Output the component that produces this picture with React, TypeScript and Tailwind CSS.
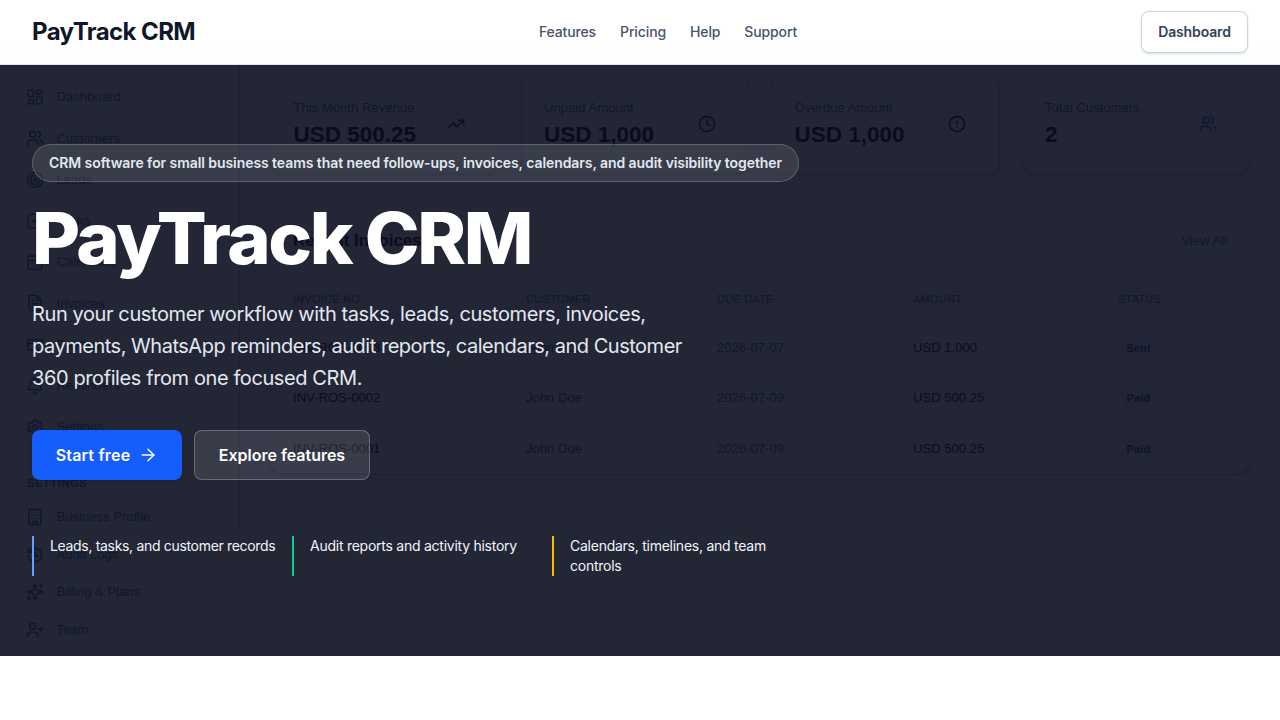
import {
  ArrowRight,
  Bell,
  Building,
  CalendarDays,
  CircleAlert,
  Clock,
  CreditCard,
  FileText,
  History,
  LayoutDashboard,
  Settings,
  Sparkles,
  SquareCheckBig,
  Target,
  TrendingUp,
  UserPlus,
  Users,
} from "lucide-react";
import type { LucideIcon } from "lucide-react";

interface NavItem {
  label: string;
  icon: LucideIcon;
}

const mainItems: NavItem[] = [
  { label: "Dashboard", icon: LayoutDashboard },
  { label: "Customers", icon: Users },
  { label: "Leads", icon: Target },
  { label: "Tasks", icon: SquareCheckBig },
  { label: "Calendars", icon: CalendarDays },
  { label: "Invoices", icon: FileText },
  { label: "Payments", icon: CreditCard },
  { label: "Reminders", icon: Bell },
  { label: "Settings", icon: Settings },
];

const settingsItems: NavItem[] = [
  { label: "Business Profile", icon: Building },
  { label: "Audit Logs", icon: History },
  { label: "Billing & Plans", icon: Sparkles },
  { label: "Team", icon: UserPlus },
];

const stats = [
  { label: "This Month Revenue", value: "USD 500.25", icon: TrendingUp, color: "text-[#0c1024]" },
  { label: "Unpaid Amount", value: "USD 1,000", icon: Clock, color: "text-[#120d1f]" },
  { label: "Overdue Amount", value: "USD 1,000", icon: CircleAlert, color: "text-[#120a1c]" },
  { label: "Total Customers", value: "2", icon: Users, color: "text-[#13182e]" },
];

const invoices = [
  { no: "INV-ROS-0003", customer: "John Doe", due: "2026-07-07", amount: "USD 1,000", status: "Sent" },
  { no: "INV-ROS-0002", customer: "John Doe", due: "2026-07-09", amount: "USD 500.25", status: "Paid" },
  { no: "INV-ROS-0001", customer: "John Doe", due: "2026-07-09", amount: "USD 500.25", status: "Paid" },
];

const highlights = [
  {
    text: "Leads, tasks, and customer records",
    className: "border-[#64a0ff] tracking-[-0.023em]",
  },
  {
    text: "Audit reports and activity history",
    className: "border-[#00d492] tracking-[-0.018em]",
  },
  {
    text: "Calendars, timelines, and team\ncontrols",
    className: "border-[#ffb900] tracking-[-0.018em]",
  },
];

function Header() {
  return (
    <header className="flex h-[65px] items-center justify-between border-b border-slate-200 bg-linear-to-b from-white from-60% to-[#fcfefe] px-8">
      <a className="w-[163px] text-[24px] leading-8 font-bold tracking-[-0.024em] whitespace-nowrap text-[#0f172b]">
        PayTrack CRM
      </a>
      <nav className="flex gap-6 text-sm font-medium tracking-[-0.009em] text-[#45556c]">
        <a>Features</a>
        <a>Pricing</a>
        <a>Help</a>
        <a>Support</a>
      </nav>
      <button className="h-[42px] w-[107px] rounded-lg border border-[#cad5e2] bg-white text-sm font-semibold tracking-[-0.01em] text-[#314158] shadow-sm">
        Dashboard
      </button>
    </header>
  );
}

function SidebarRow({ item, className = "" }: { item: NavItem; className?: string }) {
  const Icon = item.icon;
  return (
    <div className={`flex items-center gap-[12.5px] pl-[26px] ${className}`}>
      <Icon size={18} strokeWidth={2} />
      <span>{item.label}</span>
    </div>
  );
}

// Dimmed product view that sits behind the hero copy
function DashboardBackdrop() {
  return (
    <div
      aria-hidden
      className="absolute inset-0 flex overflow-hidden bg-[#232635] font-['Liberation_Sans',Arial,sans-serif] text-[13.1px] text-[#11162b]"
    >
      <div className="w-[240px] shrink-0">
        <div className="h-[462px] border-r border-[#1d2031] pt-[11.5px]">
          {mainItems.map((item) => (
            <SidebarRow key={item.label} item={item} className="h-[41.25px]" />
          ))}
          <p className="mt-[25.5px] pl-[27px] text-[11px] leading-5 font-bold tracking-[0.06em]">
            SETTINGS
          </p>
          <div className="pt-[5px]">
            {settingsItems.map((item) => (
              <SidebarRow key={item.label} item={item} className="h-[37.5px]" />
            ))}
          </div>
        </div>
      </div>

      <div className="h-[462px] flex-1 bg-[#222536] pt-[10px] pr-[30px] pl-[30px]">
        <div className="grid grid-cols-4 gap-[22px]">
          {stats.map(({ label, value, icon: Icon, color }) => (
            <div
              key={label}
              className="flex h-[99px] justify-between rounded-xl border border-[#1f2234] bg-[#232635] pt-[22px] pr-[23.5px] pl-[22.5px] shadow-[0_1px_1px_#1e2133]"
            >
              <div>
                <p className="leading-5">{label}</p>
                <p className="mt-px text-[22.5px] leading-8 font-bold text-[#0c0a1b]">
                  {value}
                </p>
              </div>
              <div className={`mt-2 flex size-9 shrink-0 items-center justify-center rounded-lg bg-[#222536] ${color}`}>
                <Icon size={18} strokeWidth={2} />
              </div>
            </div>
          ))}
        </div>

        <div className="mt-[30px] overflow-hidden rounded-xl border border-[#1f2234] bg-[#232635] shadow-[0_1px_1px_#1e2133]">
          <div className="flex h-[72px] items-center justify-between px-[22px]">
            <h2 className="text-[16.9px] font-bold text-[#0c0c1e]">Recent Invoices</h2>
            <span className="text-[#101632]">View All</span>
          </div>
          <div className="grid h-[45px] grid-cols-[233px_191px_196px_205px_1fr] items-center bg-[#222536] pl-[22px] text-[11px] tracking-[0.02em]">
            <span>INVOICE NO</span>
            <span>CUSTOMER</span>
            <span>DUE DATE</span>
            <span>AMOUNT</span>
            <span>STATUS</span>
          </div>
          {invoices.map((invoice) => (
            <div
              key={invoice.no}
              className="grid h-[50.5px] grid-cols-[233px_191px_196px_205px_1fr] items-center border-b border-[#222536] pt-[2px] pl-[22px] last:h-[49.5px] last:border-b-0"
            >
              <span className="text-[#0b0c1e]">{invoice.no}</span>
              <span className="text-[#10142a]">{invoice.customer}</span>
              <span>{invoice.due}</span>
              <span className="text-[#0b0c1e]">{invoice.amount}</span>
              <span className="w-[41px] rounded-full bg-[#222536] text-center text-[11.25px] leading-5 font-bold text-[#0e132b]">
                {invoice.status}
              </span>
            </div>
          ))}
        </div>
      </div>
    </div>
  );
}

function Hero() {
  return (
    <section className="relative h-[591px]">
      <DashboardBackdrop />
      <div className="relative px-8 pt-[79px]">
        <p className="flex h-[38px] w-[767px] items-center rounded-full border border-white/20 bg-white/10 px-4 text-sm font-semibold tracking-[-0.005em] whitespace-nowrap text-slate-200">
          CRM software for small business teams that need follow-ups, invoices, calendars, and audit visibility together
        </p>
        <h1 className="mt-5 origin-left scale-x-104 text-[71px] leading-[72px] font-extrabold tracking-[-0.033em] whitespace-nowrap text-white">
          PayTrack CRM
        </h1>
        <p className="mt-6 w-[680px] text-[20px] leading-8 tracking-[-0.023em] text-slate-200">
          <span className="tracking-[-0.02em]">
            Run your customer workflow with tasks, leads, customers, invoices,
          </span>
          <br />
          <span className="tracking-[-0.024em]">
            payments, WhatsApp reminders, audit reports, calendars, and Customer
          </span>
          <br />
          <span className="tracking-[-0.02em]">360 profiles from one focused CRM.</span>
        </p>
        <div className="mt-9 flex gap-3 text-base font-semibold text-white">
          <button className="flex h-[50px] w-[150px] items-center justify-center gap-2 rounded-lg bg-[#155dfc] tracking-[0.012em] shadow-sm">
            Start free
            <ArrowRight size={20} strokeWidth={1.7} />
          </button>
          <button className="h-[50px] w-[176px] rounded-lg border border-white/25 bg-white/10 tracking-[-0.001em]">
            Explore features
          </button>
        </div>
        <div className="mt-14 grid h-10 w-[764px] grid-cols-3 gap-4 text-sm text-slate-100">
          {highlights.map((item) => (
            <div
              key={item.text}
              className={`border-l-2 pl-4 whitespace-pre ${item.className}`}
            >
              {item.text}
            </div>
          ))}
        </div>
      </div>
    </section>
  );
}

export default function App() {
  return (
    <div className="min-h-screen bg-white font-[Inter,sans-serif]">
      <Header />
      <Hero />
    </div>
  );
}
